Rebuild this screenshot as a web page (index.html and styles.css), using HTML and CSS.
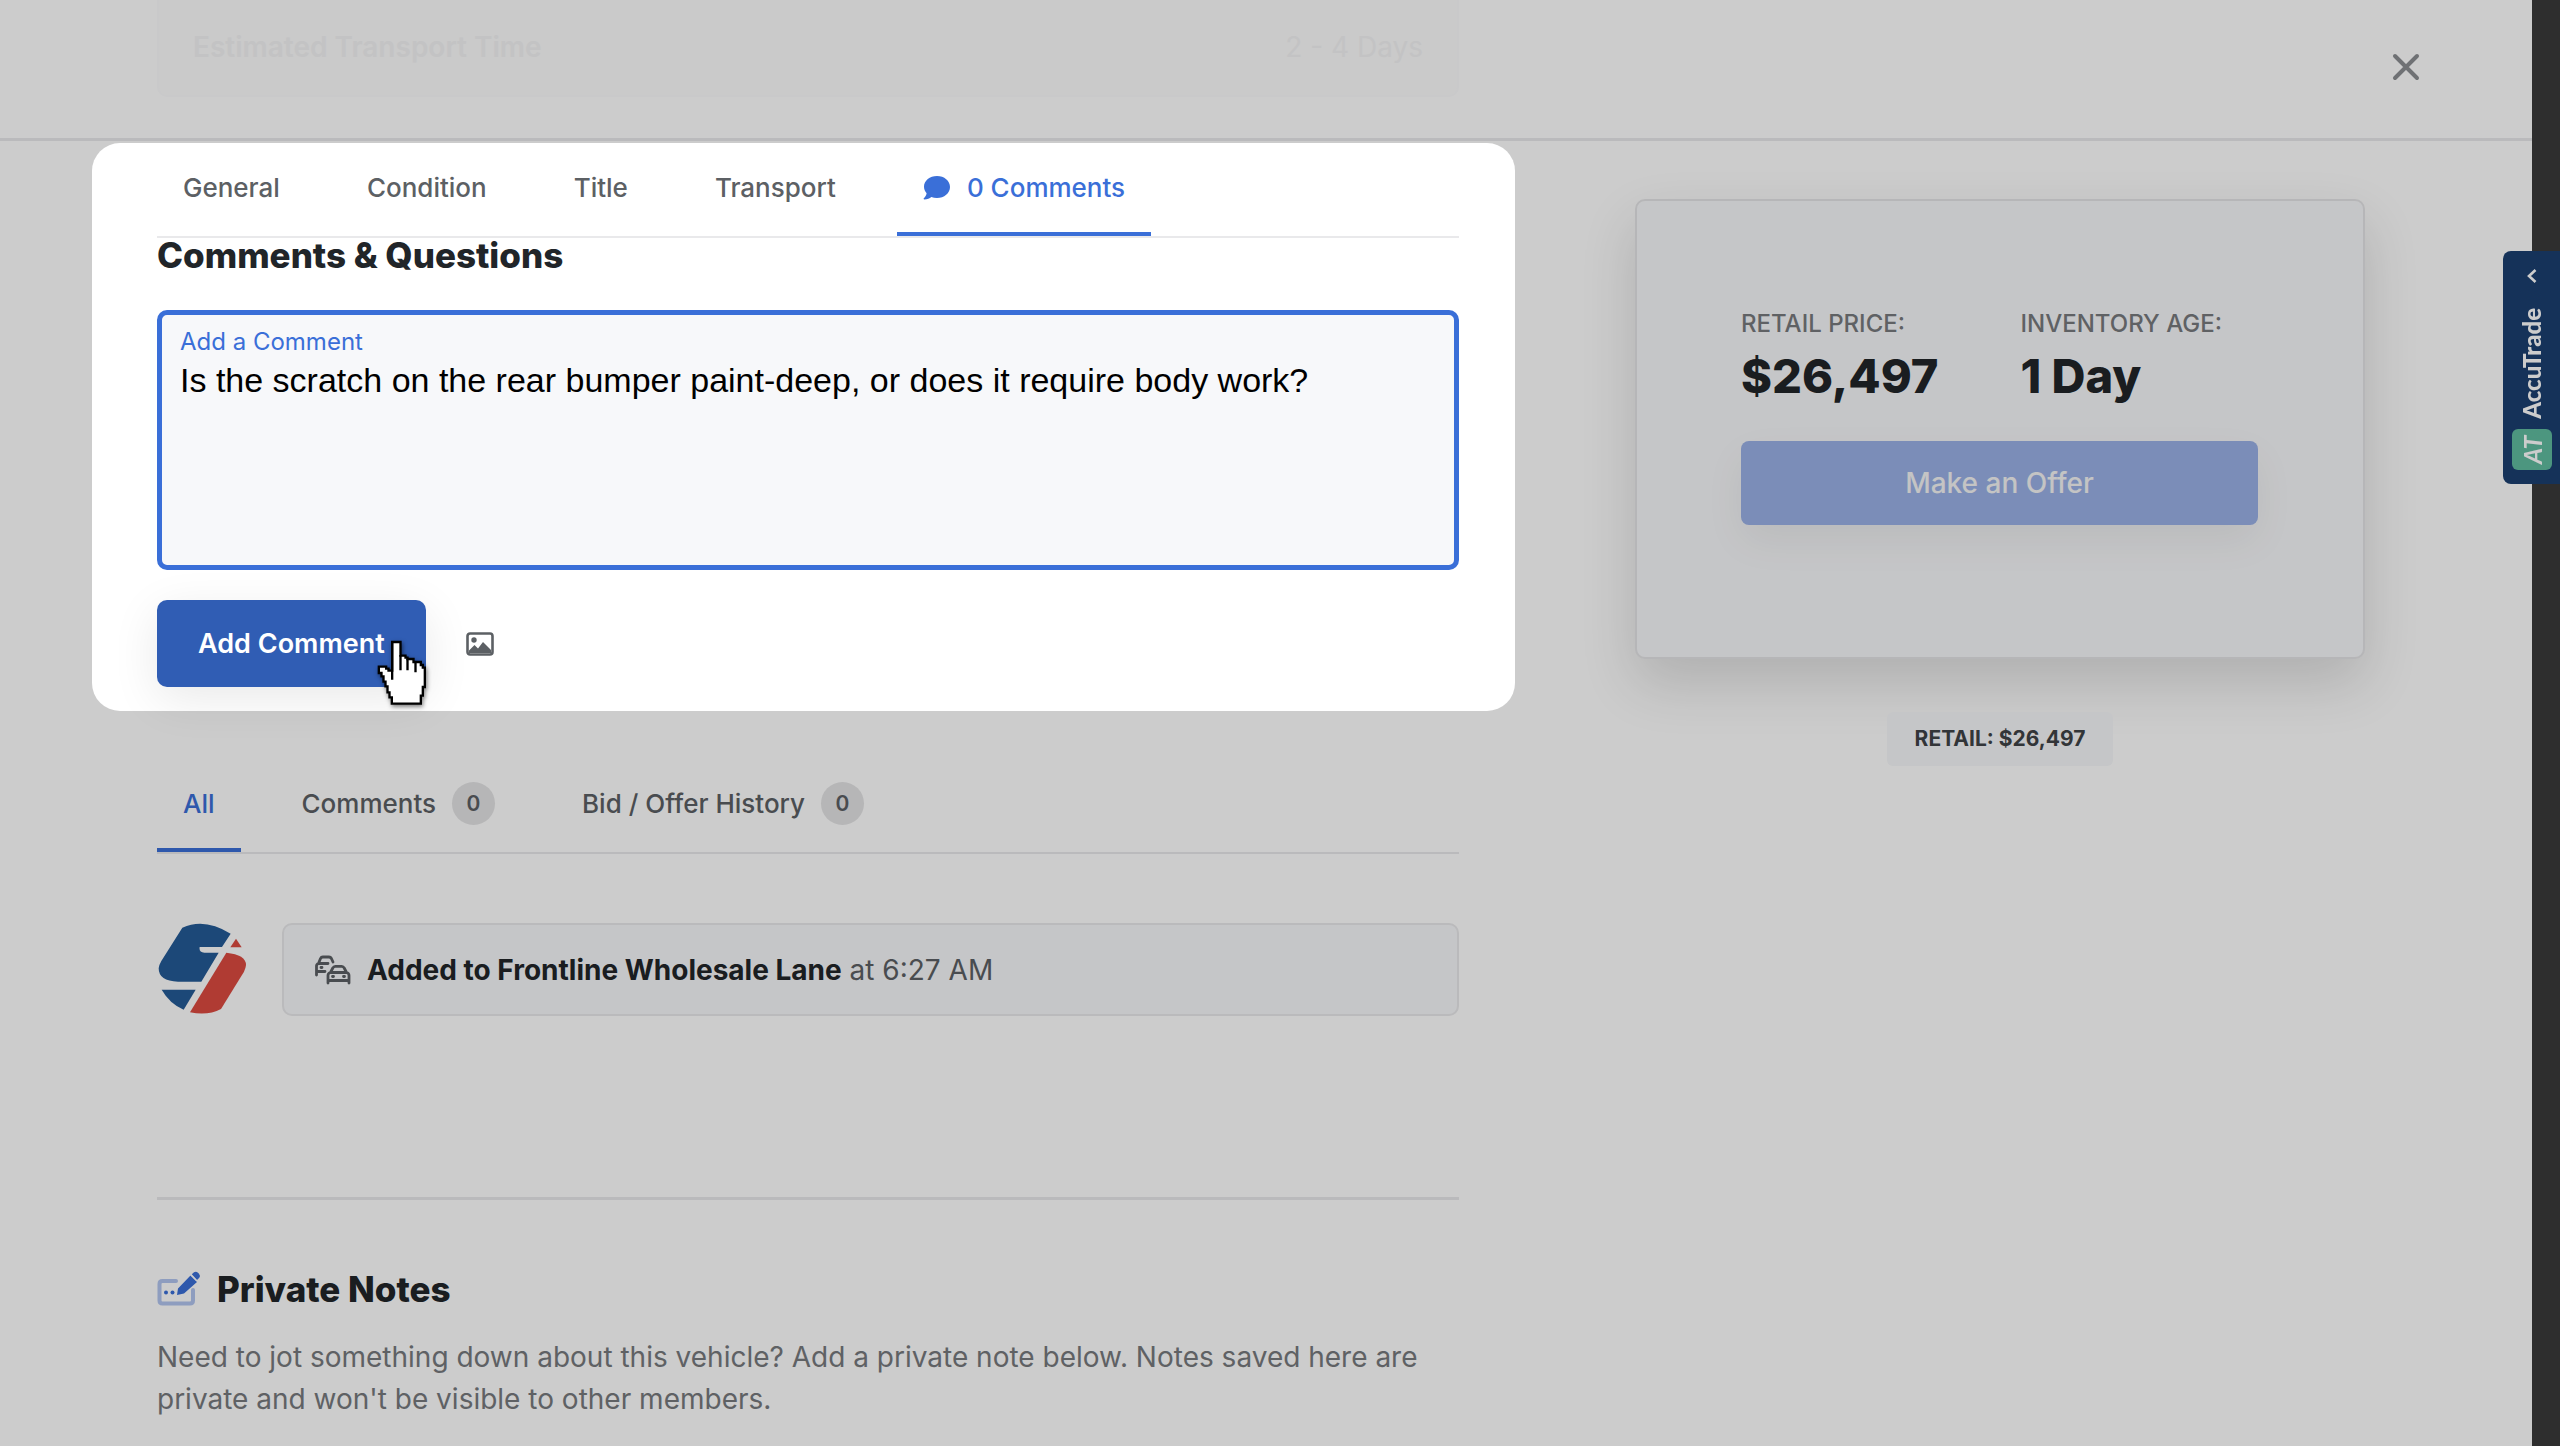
FILE: index.html
```html
<!DOCTYPE html>
<html lang="en">
<head>
<meta charset="utf-8">
<title>Comments &amp; Questions</title>
<meta name="viewport" content="width=device-width, initial-scale=1">
<link rel="stylesheet" href="styles.css">
</head>
<body>
<div class="page">
  <div class="panel">
    <header class="panel-head columns">
      <div class="faded-row"><strong>Estimated Transport Time</strong><span>2 - 4 Days</span></div>
      <button class="close" type="button" aria-label="Close">
        <svg width="28" height="28" viewBox="0 0 28 28" fill="none" stroke="currentColor" stroke-width="4" stroke-linecap="round"><path d="M3 3l22 22M25 3L3 25"/></svg>
      </button>
    </header>
    <div class="columns body">
      <main>
        <section class="composer">
          <div class="spotlight"></div>
          <nav class="tabs">
            <a href="#general">General</a>
            <a href="#condition">Condition</a>
            <a href="#title">Title</a>
            <a href="#transport">Transport</a>
            <a href="#comments" class="active">
              <svg class="bubble" width="27" height="25" viewBox="0 0 27 25" fill="currentColor"><path d="M14 1C6.800 1 1 5.700 1 11.800c0 2.400 1 4.700 2.600 6.500C3.300 20.500 2.200 22 .8 23.300c-.4.500-.1 1.200.5 1.200 3 0 5.500-1.200 7-2.500 1.700.6 3.700 1 5.700 1 7.200 0 13-4.800 13-11S21.200 1 14 1z"/></svg>0 Comments</a>
          </nav>
          <h2>Comments &amp; Questions</h2>
          <div class="field">
            <label for="comment">Add a Comment</label>
            <textarea id="comment" spellcheck="false">Is the scratch on the rear bumper paint-deep, or does it require body work?</textarea>
          </div>
          <div class="actions">
            <button class="primary" type="button">Add Comment</button>
            <button class="attach" type="button" aria-label="Attach image">
              <svg width="28" height="24" viewBox="0 0 28 24"><rect x="1.500" y="1.500" width="25" height="21" rx="2.500" fill="none" stroke="currentColor" stroke-width="2.600"/><circle cx="8" cy="8" r="2.700" fill="currentColor"/><path d="M3 21v-2.500l5.500-5.500 3.500 3.500 5-6.500 8 8v3z" fill="currentColor"/></svg>
            </button>
            <svg class="cursor" width="51" height="68" viewBox="18 28 152 204" aria-hidden="true"><path d="M66 37H91V78H106V84H112V88H130V97H152V106H158V114H164V172H158V198H152V222H65V203H58V188H52V170H46V156H40V140H34V130H26V111H48V117H55V123H66Z" fill="#fff" stroke="#000" stroke-width="7"/><path d="M66 40V150M91 76V122M112 88V122M136 98V128" fill="none" stroke="#000" stroke-width="7"/></svg>
          </div>
        </section>

        <nav class="tabs feed-tabs">
          <a href="#all" class="active">All</a>
          <a href="#only-comments">Comments<span class="count">0</span></a>
          <a href="#history">Bid / Offer History<span class="count">0</span></a>
        </nav>

        <div class="event">
          <svg class="avatar" width="92" height="92" viewBox="22 39 276 276" aria-hidden="true">
            <path d="M98 53Q165 22 243 71L217 111H150Q147 127 164 128H207L155 215H85Q27 214 27 175Q28 165 35 153Z" fill="#245a96"/>
            <path d="M36 239H138L102 299Q60 281 36 239Z" fill="#245a96"/>
            <path d="M259 86L276 112H242Z" fill="#dc4a40"/>
            <path d="M230 128Q289 134 289 165Q288 175 283 185L214 297Q175 318 121 307Z" fill="#dc4a40"/>
          </svg>
          <div class="event-card">
            <svg width="36" height="30" viewBox="1 0 36 30" fill="none" stroke="currentColor" stroke-width="2.800" stroke-linecap="round" stroke-linejoin="round"><path d="M2.500 20V11q0-1.800 2-2.500L6.500 3.500Q7.200 2 8.800 2H15q1.600 0 2.400 1.500L19 7M4.500 8.500H14M2.500 16.500H11M7 12.500h1"/><path d="M14 28V20.500q0-2.500 2.500-3L18.800 13q.8-1.700 2.500-1.700h6.400q1.700 0 2.500 1.700l2.300 4.500q2.500.5 2.500 3V28M16.500 17.500H32.500M14 25.500H35M18.500 21.500h1M29.500 21.500h1"/></svg>
            <p><strong>Added to Frontline Wholesale Lane</strong> at 6:27 AM</p>
          </div>
        </div>

        <section class="notes">
          <h2>
            <svg width="44" height="36" viewBox="0 0 44 36" aria-hidden="true"><path d="M19 10H5.500Q2.500 10 2.500 13V29.500Q2.500 32.500 5.500 32.500H33Q36 32.500 36 29.500V19" fill="none" stroke="#b2c5ef" stroke-width="4" stroke-linecap="round"/><path d="M33.500 4.500L40 11 27 22.500 20 24l1-6.500zM34.800 3.300L37 1.300q2-1.300 4 .4l1 1q1.700 2 .3 4L40 9z" fill="#3a6fd8" /><path d="M33.800 3.800l6 6" stroke="#fff" stroke-width="1.200"/><circle cx="9" cy="21.500" r="2" fill="#3a6fd8"/><circle cx="15.500" cy="21.500" r="2" fill="#3a6fd8"/></svg>
            Private Notes</h2>
          <p>Need to jot something down about this vehicle? Add a private note below. Notes saved here are private and won't be visible to other members.</p>
        </section>
      </main>

      <aside>
        <div class="offer-card">
          <dl>
            <div><dt>RETAIL PRICE:</dt><dd>$26,497</dd></div>
            <div><dt>INVENTORY AGE:</dt><dd>1 Day</dd></div>
          </dl>
          <button class="offer" type="button">Make an Offer</button>
        </div>
        <span class="retail">RETAIL: $26,497</span>
      </aside>
    </div>
  </div>
  <button class="accutrade" type="button">
    <svg width="10" height="16" viewBox="0 0 10 16" fill="none" stroke="#fff" stroke-width="2.600"><path d="M8.500 2L2 8l6.500 6"/></svg>
    <span class="brand">AccuTrade</span>
    <span class="mark">AT</span>
  </button>
</div>
</body>
</html>
```

FILE: styles.css
```css
:root {
  --blue: #3a6fd8;
  --ink: #212529;
  --grey: #5c6064;
  --line: #e9e9eb;
  --surface: #f7f8fa;
}

* { box-sizing: border-box; }

html { overflow: hidden; }

body {
  margin: 0;
  font: 500 28px/32px Inter, "Liberation Sans", sans-serif;
  color: var(--grey);
  background: #3a3a3a;
}

h2, p, dl, dd { margin: 0; }
a { color: inherit; text-decoration: none; }
button { font: inherit; border: 0; padding: 0; background: none; color: inherit; }
svg { display: block; flex: none; }

.page { position: relative; min-height: 100vh; padding-right: 28px; }
.panel { background: #fff; min-height: 100vh; }

.columns {
  display: grid;
  grid-template-columns: 1302fr 730fr;
  column-gap: 176px;
  padding: 0 167px 0 157px;
}

.panel-head {
  position: relative;
  height: 141px;
  border-bottom: 3px solid var(--line);
}

.faded-row {
  display: flex;
  justify-content: space-between;
  height: 97px;
  padding: 31px 34px 0;
  border: solid #fcfcfd;
  border-width: 0 2px 2px;
  border-radius: 0 0 10px 10px;
  background: #fdfdfd;
  color: #f4f4f5;
  font-weight: 400;
}
.faded-row strong { font-weight: 600; }

.close {
  position: absolute;
  top: 53px;
  right: 112px;
  color: #8b8e91;
}

.composer { position: relative; height: 570px; }

/* The wide shadow dims everything outside the highlighted area. */
.spotlight {
  position: absolute;
  inset: 2px -56px 0 -65px;
  border-radius: 28px;
  box-shadow: 0 0 0 200vmax rgba(0, 0, 0, .2);
  pointer-events: none;
  z-index: 10;
}

.tabs {
  display: flex;
  gap: 35px;
  height: 97px;
  border-bottom: 2px solid var(--line);
  font-size: 26px;
}
.tabs a {
  display: flex;
  align-items: center;
  padding: 2px 26px 0;
  border-bottom: 4px solid transparent;
}
.tabs .active { color: var(--blue); border-color: var(--blue); }
.bubble { margin-right: 17px; }

.composer h2, .notes h2 {
  font-weight: 800;
  font-size: 35px;
  line-height: 34px;
  color: var(--ink);
}

.field {
  height: 260px;
  margin-top: 38px;
  padding: 11px 18px;
  border: 5px solid var(--blue);
  border-radius: 10px;
  background: var(--surface);
}
.field label {
  display: block;
  font-weight: 400;
  font-size: 24px;
  line-height: 32px;
  color: var(--blue);
}
.field textarea {
  display: block;
  width: 100%;
  height: 180px;
  padding: 0;
  border: 0;
  outline: 0;
  resize: none;
  background: none;
  color: #000;
  font: 34px/44px "Liberation Sans", Arial, sans-serif;
}

.actions {
  position: relative;
  display: flex;
  align-items: center;
  gap: 40px;
  margin-top: 30px;
}
.primary {
  height: 87px;
  padding: 0 41px;
  border-radius: 10px;
  background: #305db4;
  color: #fff;
  font-weight: 600;
  font-size: 27px;
  box-shadow: 0 12px 48px rgba(0, 0, 0, .09);
}
.cursor {
  position: absolute;
  left: 219px;
  top: 39px;
  z-index: 20;
  filter: drop-shadow(1px 2px 2px rgba(0, 0, 0, .5));
}

.feed-tabs { margin-top: 46px; }
.count {
  width: 43px;
  height: 43px;
  margin-left: 16px;
  border-radius: 50%;
  background: #e4e4e5;
  font-weight: 600;
  font-size: 21px;
  line-height: 43px;
  text-align: center;
}

.event { display: flex; gap: 33px; margin-top: 69px; }
.event-card {
  flex: 1;
  display: flex;
  align-items: center;
  gap: 16px;
  height: 93px;
  padding: 0 31px;
  border: 2px solid var(--line);
  border-radius: 10px;
  background: var(--surface);
  font-weight: 400;
}
.event-card strong { font-weight: 700; color: var(--ink); }

.notes {
  margin-top: 181px;
  padding-top: 71px;
  border-top: 3px solid var(--line);
}
.notes h2 { display: flex; align-items: center; gap: 16px; }
.notes p {
  margin-top: 29px;
  font-weight: 400;
  line-height: 42px;
  color: #777a7e;
}

aside { padding-top: 58px; text-align: center; }
.offer-card {
  height: 460px;
  padding: 107px 105px 0 104px;
  border: 2px solid #e4e4e6;
  border-radius: 10px;
  background: var(--surface);
  text-align: left;
  box-shadow: 0 24px 56px rgba(0, 0, 0, .14);
}
dl { display: flex; gap: 82px; }
dt { font-size: 24px; color: #777a7e; }
dd {
  margin-top: 9px;
  font-size: 47px;
  line-height: 54px;
  font-weight: 800;
  color: var(--ink);
}
.offer {
  width: 100%;
  height: 84px;
  margin-top: 38px;
  border-radius: 8px;
  background: #9ab1e6;
  color: #f5f5f5;
  box-shadow: 0 16px 40px rgba(0, 0, 0, .06);
}
.retail {
  display: inline-block;
  margin-top: 53px;
  padding: 0 28px;
  border-radius: 6px;
  background: var(--surface);
  color: #3f4347;
  font-size: 21px;
  line-height: 54px;
  font-weight: 700;
}

.accutrade {
  position: absolute;
  top: 251px;
  right: 0;
  display: flex;
  flex-direction: column;
  align-items: center;
  width: 57px;
  height: 233px;
  padding: 17px 0 14px;
  border-radius: 8px 0 0 8px;
  background: #1b3f70;
  color: #fff;
  font: 900 24px/30px Lato, "Liberation Sans", sans-serif;
}
.brand, .mark { writing-mode: vertical-rl; transform: rotate(180deg); }
.brand { margin: auto 0 10px; }
.mark {
  width: 40px;
  height: 41px;
  border-radius: 6px;
  background: #5fbc9f;
  font-weight: 700;
  font-size: 25px;
  line-height: 40px;
  font-style: italic;
  text-align: center;
}
```
